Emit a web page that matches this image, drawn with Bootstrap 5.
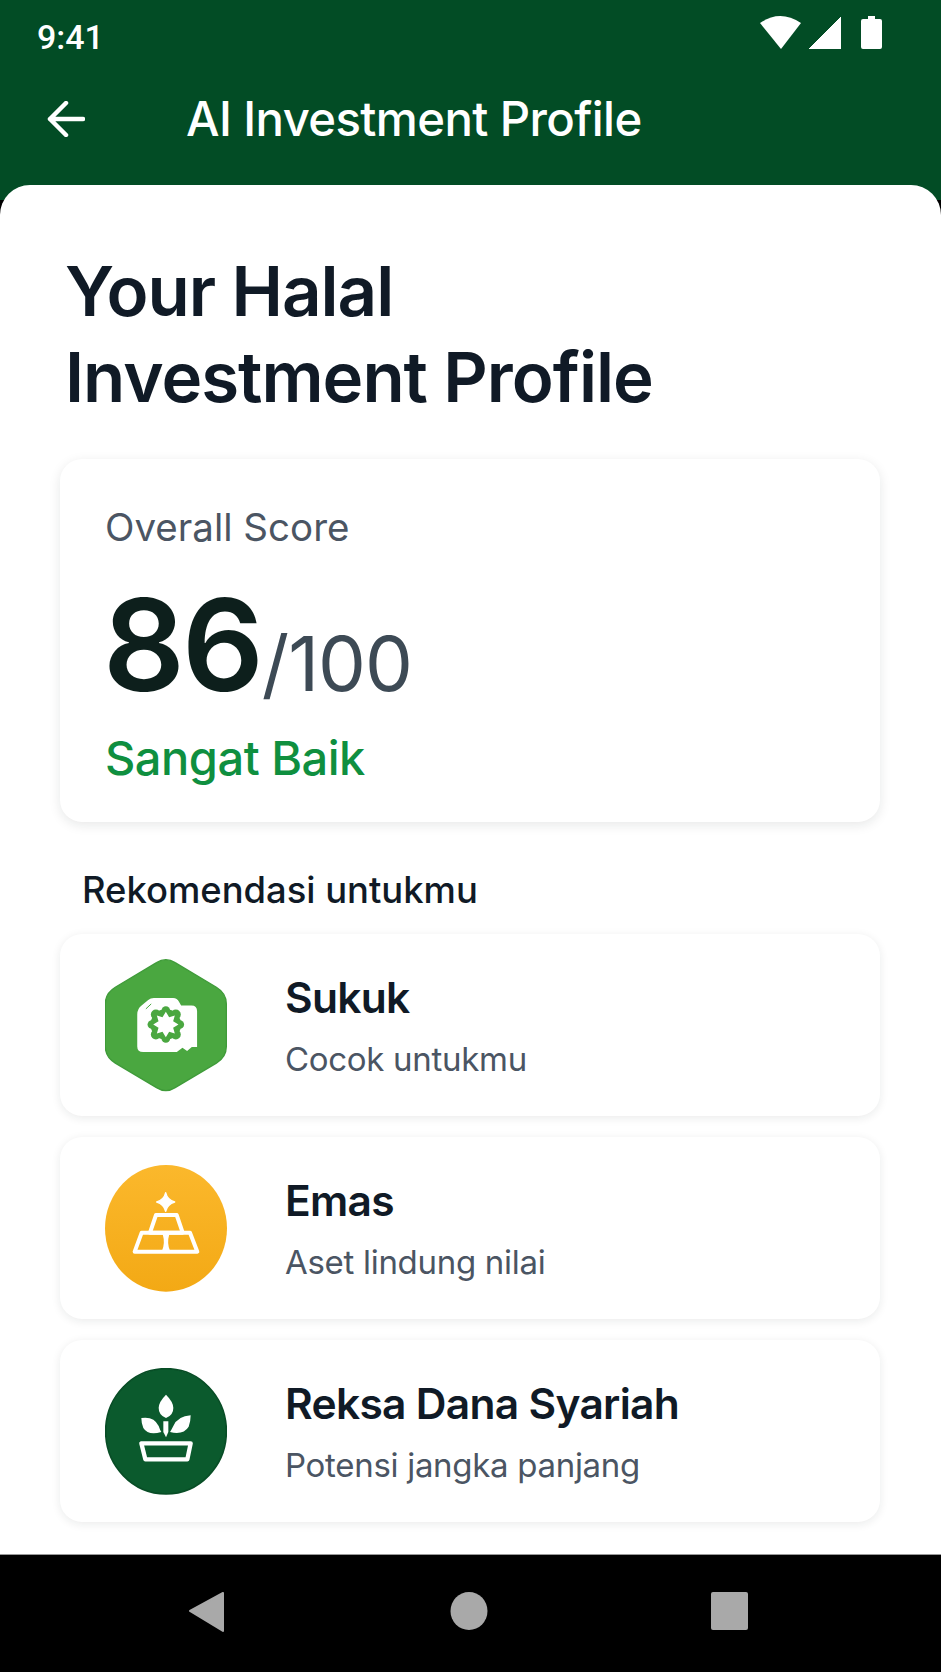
<!DOCTYPE html>
<html lang="en">
<head>
<meta charset="UTF-8">
<title>AI Investment Profile</title>
<link href="https://cdn.jsdelivr.net/npm/bootstrap@5.3.0/dist/css/bootstrap.min.css" rel="stylesheet">
<style>
  html, body { margin: 0; background: #000; }
  body { font-family: Inter, "Noto Sans", sans-serif; }
  .phone { width: 941px; height: 1672px; overflow: hidden; }
  .app-head { height: 200px; background: #024c25; color: #fff; flex: none; padding: 16px 59px 0 37px; }
  .clock { font-family: Roboto, sans-serif; font-size: 34px; font-weight: 500; line-height: 37px; margin-top: 3px; }
  .status-icons { gap: 7px; }
  .head-title { font-size: 47.3px; font-weight: 500; line-height: 56px; margin-left: 101px; letter-spacing: -0.6px; }
  .head-row { margin-top: 35px; margin-left: 10px; }
  .sheet { background: #fff; flex: 1 1 auto; margin-top: -15px; border-radius: 30px 30px 0 0; padding: 0 61px 0 60px; min-height: 0; }
  .page-title { font-size: 69px; font-weight: 600; line-height: 86px; color: #101a26; margin: 63px 0 0 5px; letter-spacing: -1px; }
  .score-card { height: 363px; margin-top: 39px; border: 0; border-radius: 22px; box-shadow: 0 3px 12px rgba(20,30,30,.10); padding: 44px 45px 0; }
  .score-label { font-size: 38.5px; line-height: 48px; color: #4b5563; }
  .score-line { line-height: 130px; margin-top: 29px; margin-left: -2px; color: #0d1f1c; }
  .score-big { font-size: 128px; font-weight: 600; letter-spacing: -3px; }
  .score-max { font-size: 76px; color: #3d4a55; margin-left: 1px; letter-spacing: -1px; }
  .score-word { font-size: 47px; font-weight: 500; line-height: 60px; color: #0f8f3f; margin-top: -22px; letter-spacing: -0.5px; }
  .rec-head { font-size: 36.4px; font-weight: 500; line-height: 46px; color: #101a26; margin: 45px 0 21px 22px; }
  .rec-list { gap: 21px; }
  .rec-card { height: 182px; border: 0; border-radius: 22px; box-shadow: 0 2px 10px rgba(20,30,30,.09); padding-left: 45px; }
  .rec-icon { width: 122px; flex: none; display: block; }
  .rec-text { margin-left: 58px; }
  .rec-name { font-size: 42.5px; font-weight: 600; line-height: 58px; color: #101a26; letter-spacing: -0.7px; }
  .rec-note { font-size: 33px; line-height: 46px; color: #4b5563; margin-top: 9px; letter-spacing: -0.3px; }
  .nav-bar { height: 118px; background: #000; flex: none; border-top: 1px solid #999; padding-top: 37px; }
</style>
</head>
<body>
<div class="phone d-flex flex-column">
  <header class="app-head">
    <div class="d-flex justify-content-between align-items-start">
      <div class="clock">9:41</div>
      <div class="d-flex status-icons">
        <svg width="41" height="33" viewBox="0 0 41 33"><path d="M0 7Q20-7 41 7L21 33Z" fill="#fff"/></svg>
        <svg width="33" height="33" viewBox="0 0 33 33"><path d="M33 1V33H1Z" fill="#fff" stroke="#fff" stroke-linejoin="round"/></svg>
        <svg width="21" height="33" viewBox="0 0 21 33" style="margin-left:13px"><path d="M7 0h7v3h5q2 0 2 2v26q0 2-2 2H2q-2 0-2-2V5q0-2 2-2h5z" fill="#fff"/></svg>
      </div>
    </div>
    <div class="d-flex align-items-center head-row">
      <svg width="38" height="36" viewBox="0 0 38 36" fill="none" stroke="#fff" stroke-width="4.5" stroke-linecap="round" stroke-linejoin="round"><path d="M36 18H3M19 2 3 18l16 16"/></svg>
      <div class="head-title">AI Investment Profile</div>
    </div>
  </header>

  <main class="sheet">
    <h1 class="page-title">Your Halal<br>Investment Profile</h1>

    <div class="card score-card">
      <div class="score-label">Overall Score</div>
      <div class="score-line"><span class="score-big">86</span><span class="score-max">/100</span></div>
      <div class="score-word">Sangat Baik</div>
    </div>

    <div class="rec-head">Rekomendasi untukmu</div>

    <div class="d-flex flex-column rec-list">
      <div class="card rec-card flex-row align-items-center">
        <svg class="rec-icon" height="134" viewBox="75 52 367 403">
          <path d="M230 66Q258 48 286 66L410 140Q440 158 440 190V318Q440 350 410 368L286 442Q258 460 230 442L106 368Q76 350 76 318V190Q76 158 106 140Z" fill="#4aa740" stroke="#3f9b39" stroke-width="4"/>
          <path d="M172 222Q172 205 185 195L205 178Q212 172 222 172H280Q292 172 298 184L304 195H335Q352 195 352 212V320H336L322 332 308 322 291 335H190Q172 335 172 318Z" fill="#fff"/>
          <path d="M198 205 214 190" stroke="#4aa740" stroke-width="3"/>
          <g fill="#4aa740">
            <circle cx="258" cy="252" r="46"/>
            <circle cx="258" cy="210" r="13"/><circle cx="258" cy="294" r="13"/>
            <circle cx="216" cy="252" r="13"/><circle cx="300" cy="252" r="13"/>
            <circle cx="228" cy="222" r="15"/><circle cx="288" cy="222" r="15"/>
            <circle cx="228" cy="282" r="15"/><circle cx="288" cy="282" r="15"/>
          </g>
          <path d="M258 214 268 230 285 225 280 242 296 252 280 262 285 279 268 274 258 290 248 274 231 279 236 262 220 252 236 242 231 225 248 230Z" fill="#fff"/>
        </svg>
        <div class="rec-text">
          <div class="rec-name">Sukuk</div>
          <div class="rec-note">Cocok untukmu</div>
        </div>
      </div>

      <div class="card rec-card flex-row align-items-center">
        <svg class="rec-icon" height="127" viewBox="75 55 366 381">
          <defs><linearGradient id="goldFill" x1="0" y1="0" x2="0" y2="1"><stop offset="0" stop-color="#fbb82c"/><stop offset="1" stop-color="#f3a915"/></linearGradient></defs>
          <ellipse cx="258" cy="245" rx="183" ry="190" fill="url(#goldFill)"/>
          <path d="M257 138Q262 160 284 166 262 172 257 194 252 172 230 166 252 160 257 138Z" fill="#fff" stroke="#fff" stroke-width="4" stroke-linejoin="round"/>
          <g fill="none" stroke="#fff" stroke-width="12" stroke-linejoin="round">
            <path d="M228 205H290L308 258H210Z"/>
            <path d="M185 258H330L352 315H164Z"/>
          </g>
          <path d="M248 262H268Q260 290 270 312H246Q256 290 248 262Z" fill="#fff"/>
        </svg>
        <div class="rec-text">
          <div class="rec-name">Emas</div>
          <div class="rec-note">Aset lindung nilai</div>
        </div>
      </div>

      <div class="card rec-card flex-row align-items-center">
        <svg class="rec-icon" height="127" viewBox="75 48 366 381">
          <ellipse cx="258" cy="238" rx="181" ry="188" fill="#0b5a2d" stroke="#084d26" stroke-width="5"/>
          <path d="M258 128Q236 150 236 168 236 190 258 198 280 190 280 168 280 150 258 128Z" fill="#fff"/>
          <path d="M184 198Q222 192 236 222 240 234 244 240 205 252 190 228 184 214 184 198Z" fill="#fff"/>
          <path d="M332 190Q294 192 280 222 274 234 270 240 310 250 326 224 332 208 332 190Z" fill="#fff"/>
          <path d="M250 208H265V240L258 256 250 240Z" fill="#fff"/>
          <path d="M184 274H332L322 322H196Z" fill="none" stroke="#fff" stroke-width="13" stroke-linejoin="round"/>
        </svg>
        <div class="rec-text">
          <div class="rec-name">Reksa Dana Syariah</div>
          <div class="rec-note">Potensi jangka panjang</div>
        </div>
      </div>
    </div>
  </main>

  <nav class="nav-bar position-relative d-flex">
    <svg width="941" height="40" viewBox="0 0 941 40" fill="#a9a9a9">
      <path d="M223 1V39L190 19Z" stroke="#a9a9a9" stroke-width="2" stroke-linejoin="round"/>
      <ellipse cx="469" cy="19" rx="18.5" ry="19"/>
      <rect x="711" y="0" width="37" height="38" rx="2"/>
    </svg>
  </nav>
</div>
<script src="https://cdn.jsdelivr.net/npm/bootstrap@5.3.0/dist/js/bootstrap.bundle.min.js"></script>
</body>
</html>
